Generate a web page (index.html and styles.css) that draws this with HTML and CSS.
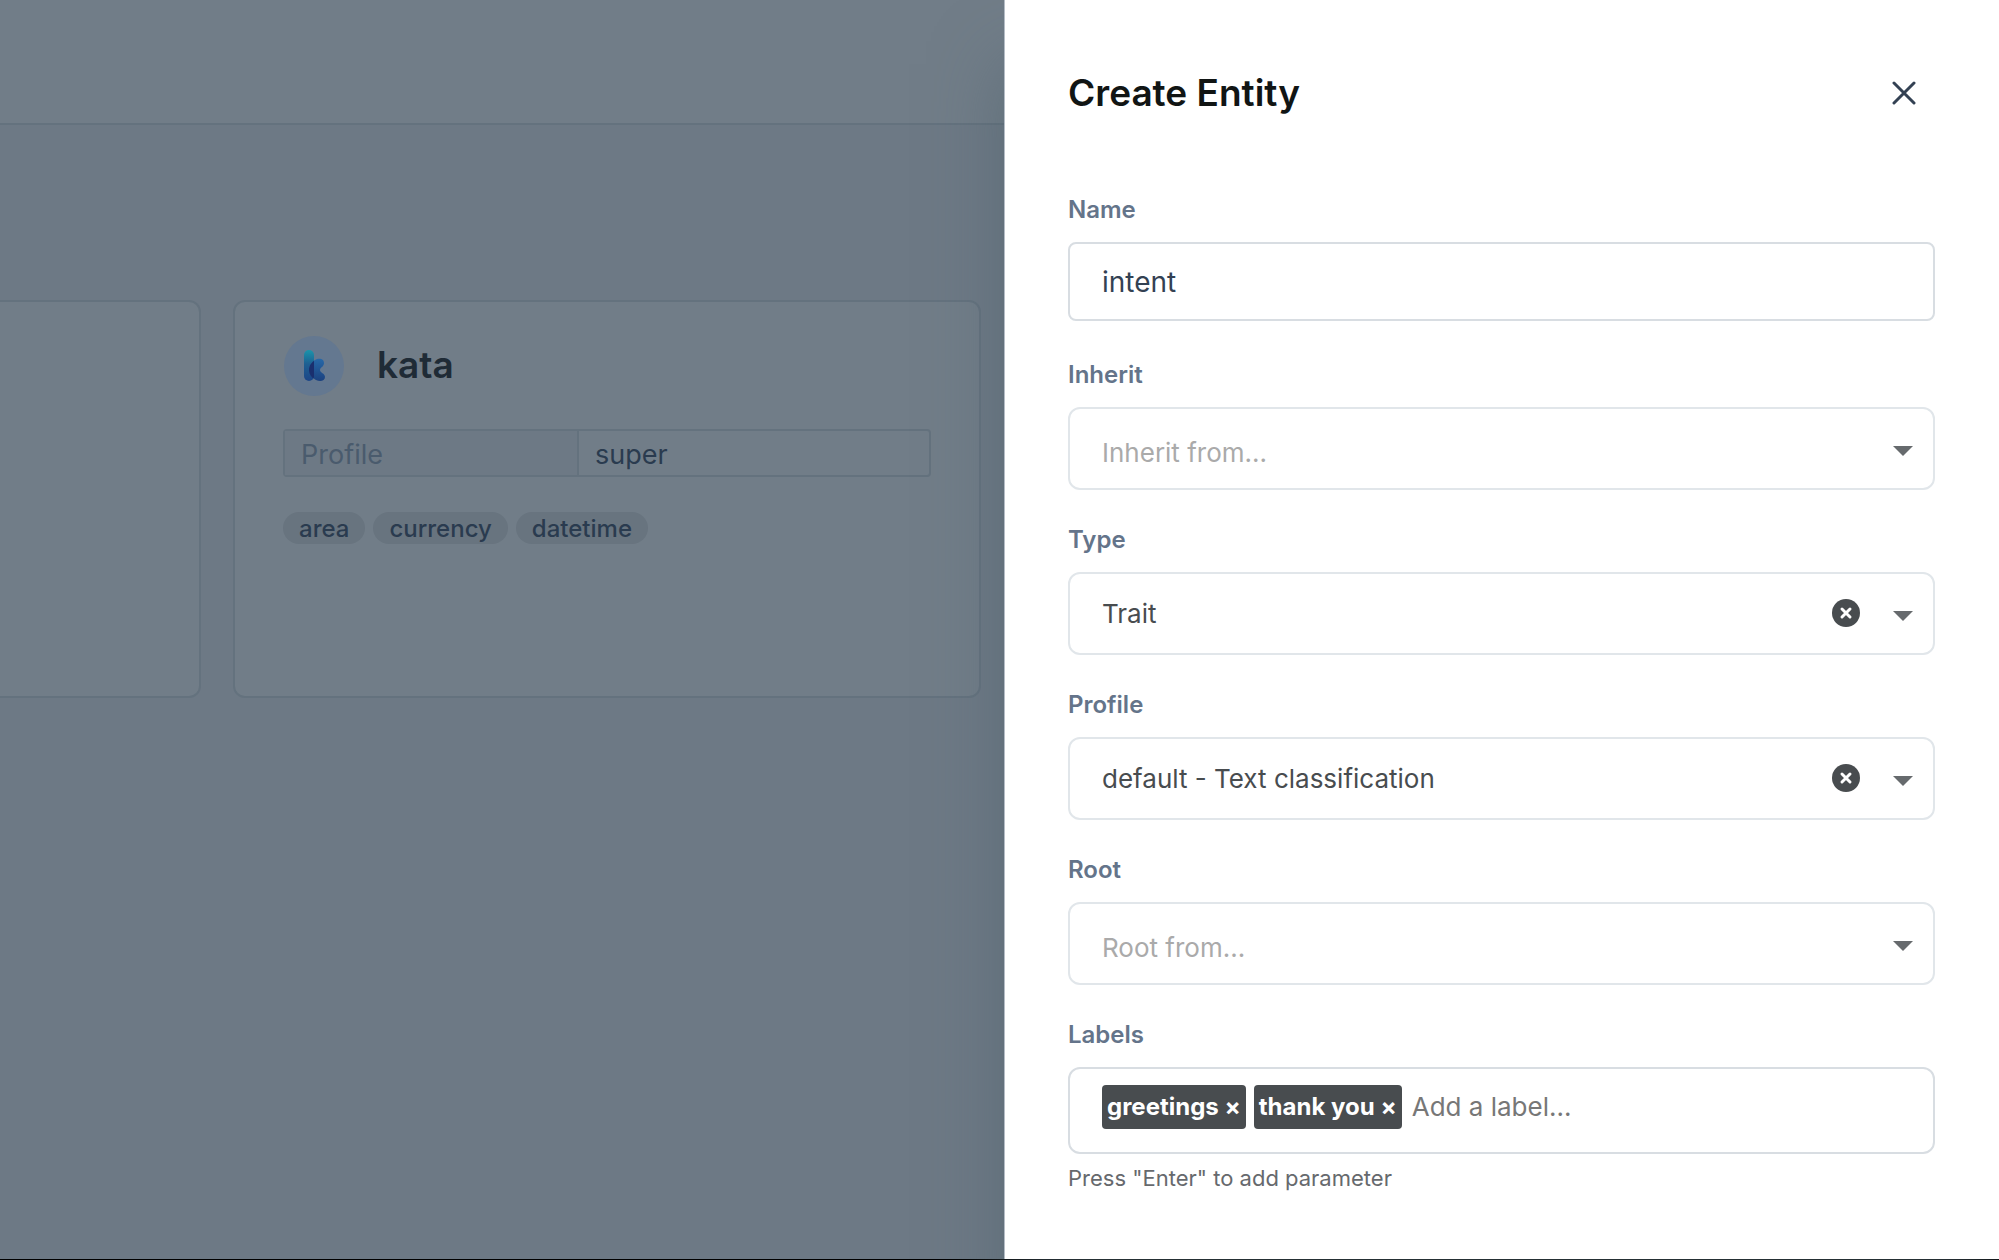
FILE: index.html
```html
<!DOCTYPE html>
<html lang="en">
<head>
<meta charset="utf-8">
<meta name="viewport" content="width=device-width, initial-scale=1">
<title>Create Entity</title>
<link rel="stylesheet" href="styles.css">
</head>
<body>
<div class="app">
  <main class="page">
    <header class="topbar"></header>
    <div class="cards">
      <article class="card card-cut"></article>
      <article class="card">
        <div class="card-head">
          <svg class="avatar" viewBox="0 0 60 60" aria-hidden="true">
            <defs>
              <linearGradient id="stem" x1="0" y1="0" x2="0" y2="1">
                <stop offset="0" stop-color="#1b95ab"/>
                <stop offset=".45" stop-color="#1d5f92"/>
                <stop offset="1" stop-color="#1c4587"/>
              </linearGradient>
              <linearGradient id="leg" x1="0" y1="0" x2="0" y2="1">
                <stop offset="0" stop-color="#2668a8"/>
                <stop offset="1" stop-color="#1b417f"/>
              </linearGradient>
              <clipPath id="stem-clip"><rect x="20" y="14" width="10" height="31" rx="5"/></clipPath>
            </defs>
            <circle cx="30" cy="30" r="30" fill="#647890"/>
            <rect x="20" y="14" width="10" height="31" rx="5" fill="url(#stem)"/>
            <path d="M25 34C25 29 28 26 31 24C34 22 40 22 40 27C40 31 36 31 36 34C36 37 41 37 41 41C41 45 36 46 32 44C29 42 25 39 25 34Z" fill="url(#leg)"/>
            <path clip-path="url(#stem-clip)" d="M25 34C25 29 28 26 31 24V44C29 42 25 39 25 34Z" fill="#1a2f6e"/>
          </svg>
          <h2 class="card-title">kata</h2>
        </div>
        <table class="props">
          <tr><th scope="row">Profile</th><td>super</td></tr>
        </table>
        <ul class="chips">
          <li>area</li><li>currency</li><li>datetime</li>
        </ul>
      </article>
    </div>
  </main>

  <aside class="drawer" role="dialog" aria-labelledby="drawer-title">
    <header class="drawer-head">
      <h1 id="drawer-title">Create Entity</h1>
      <button class="close" type="button" aria-label="Close">
        <svg viewBox="0 0 24 24" width="24" height="24"><path d="M2 2L22 22M22 2L2 22" fill="none" stroke="#334153" stroke-width="3" stroke-linecap="round"/></svg>
      </button>
    </header>

    <form class="form">
      <div class="field">
        <label for="name">Name</label>
        <input class="text-input" id="name" type="text" value="intent">
      </div>

      <div class="field">
        <label for="inherit">Inherit</label>
        <div class="select">
          <select class="empty" id="inherit"><option>Inherit from...</option></select>
          <svg class="arrow" viewBox="0 0 20 10"><path d="M0 0H20L10 10Z"/></svg>
        </div>
      </div>

      <div class="field">
        <label for="type">Type</label>
        <div class="select">
          <select id="type"><option>Trait</option></select>
          <button class="clear" type="button" aria-label="Clear type">
            <svg viewBox="0 0 28 28"><circle cx="14" cy="14" r="14" fill="#484c4f"/><path d="M10 10L18 18M18 10L10 18" stroke="#fff" stroke-width="3" stroke-linecap="round"/></svg>
          </button>
          <svg class="arrow" viewBox="0 0 20 10"><path d="M0 0H20L10 10Z"/></svg>
        </div>
      </div>

      <div class="field">
        <label for="profile">Profile</label>
        <div class="select">
          <select id="profile"><option>default - Text classification</option></select>
          <button class="clear" type="button" aria-label="Clear profile">
            <svg viewBox="0 0 28 28"><circle cx="14" cy="14" r="14" fill="#484c4f"/><path d="M10 10L18 18M18 10L10 18" stroke="#fff" stroke-width="3" stroke-linecap="round"/></svg>
          </button>
          <svg class="arrow" viewBox="0 0 20 10"><path d="M0 0H20L10 10Z"/></svg>
        </div>
      </div>

      <div class="field">
        <label for="root">Root</label>
        <div class="select">
          <select class="empty" id="root"><option>Root from...</option></select>
          <svg class="arrow" viewBox="0 0 20 10"><path d="M0 0H20L10 10Z"/></svg>
        </div>
      </div>

      <div class="field">
        <label for="labels">Labels</label>
        <div class="tag-box">
          <span class="tag">greetings <button type="button" aria-label="Remove greetings">×</button></span>
          <span class="tag">thank you <button type="button" aria-label="Remove thank you">×</button></span>
          <input id="labels" type="text" placeholder="Add a label...">
        </div>
        <p class="help">Press "Enter" to add parameter</p>
      </div>
    </form>
  </aside>
</div>
</body>
</html>
```
FILE: styles.css
```css
* {
  box-sizing: border-box;
}

body {
  margin: 0;
  font-family: Inter, "Liberation Sans", sans-serif;
  font-size: 26px;
  color: #484c4f;
}

h1, h2, p, ul {
  margin: 0;
  padding: 0;
}

button, input, select {
  font: inherit;
  color: inherit;
}

button {
  padding: 0;
  border: 0;
  background: none;
  cursor: pointer;
}

.app {
  display: grid;
  grid-template-columns: minmax(0, 1fr) 995px;
  min-height: 100vh;
  border-bottom: 1px solid #000;
}

/* Dimmed page behind the drawer */
.page {
  background: #6d7985;
  overflow: hidden;
}

.topbar {
  height: 125px;
  background: #717d88;
  border-bottom: 2px solid #64727e;
}

.cards {
  display: flex;
  gap: 32px;
  padding: 175px 23px 0 0;
}

.card {
  flex: 0 0 748px;
  min-height: 398px;
  padding: 34px 48px;
  background: #717d88;
  border: 2px solid #64727e;
  border-radius: 12px;
}

.card-cut {
  flex: 1 1 0;
  padding: 0;
  border-left: 0;
  border-radius: 0 12px 12px 0;
}

.card-head {
  display: flex;
  align-items: center;
  gap: 32px;
  margin-bottom: 33px;
}

.avatar {
  width: 62px;
  height: 60px;
}

.card-title {
  padding-bottom: 2px;
  font-size: 37px;
  line-height: 48px;
  font-weight: 600;
  color: #1f2b36;
}

.props {
  width: 100%;
  height: 48px;
  table-layout: fixed;
  border-collapse: separate;
  border-spacing: 0;
  border: 2px solid #64727e;
  border-radius: 4px;
  font-size: 27px;
  line-height: 40px;
  text-align: left;
}

.props th {
  width: 294px;
  padding: 4px 16px 0;
  border-right: 2px solid #64727e;
  background: #6d7985;
  color: #4a5b6d;
  font-weight: 400;
}

.props td {
  padding: 4px 16px 0;
  color: #2a3b4f;
}

.chips {
  display: flex;
  gap: 8px;
  margin-top: 35px;
  list-style: none;
}

.chips li {
  padding: 2px 16px 0;
  border-radius: 16px;
  background: #68747f;
  color: #2a3b4f;
  font-size: 24px;
  line-height: 30px;
  font-weight: 500;
}

/* Drawer */
.drawer {
  position: relative;
  padding: 63px 64px 48px 63px;
  background: #fff;
  border-left: 1px solid #b5bdc6;
  box-shadow: 0 64px 64px rgba(75, 95, 105, .5);
}

.drawer-head {
  display: flex;
  align-items: center;
  justify-content: space-between;
  height: 60px;
  padding-right: 19px;
  margin-bottom: 75px;
}

.drawer-head h1 {
  font-size: 37px;
  line-height: 48px;
  font-weight: 600;
  color: #111514;
}

.close svg {
  display: block;
}

.form {
  display: grid;
  gap: 37px;
}

.field {
  min-height: 128px;
}

.field label {
  display: block;
  margin-bottom: 20px;
  font-size: 24px;
  line-height: 24px;
  font-weight: 600;
  color: #64748a;
}

.text-input {
  display: block;
  width: 100%;
  height: 79px;
  padding: 0 32px;
  border: 2px solid #d8dde2;
  border-radius: 8px;
  background: #fff;
  color: #334153;
  font-size: 28px;
}

.select {
  position: relative;
}

.select select {
  display: block;
  width: 100%;
  height: 83px;
  padding: 0 132px 0 32px;
  border: 2px solid #e1e6ea;
  border-radius: 12px;
  background: #fff;
  appearance: none;
}

.select .empty {
  padding-top: 8px;
  color: #aaa;
}

.arrow {
  position: absolute;
  right: 22px;
  top: 39px;
  width: 20px;
  height: 10px;
  fill: #666a6d;
  pointer-events: none;
}

.clear {
  position: absolute;
  right: 75px;
  top: 27px;
}

.clear svg {
  display: block;
  width: 28px;
  height: 28px;
}

.tag-box {
  display: flex;
  gap: 8px;
  height: 87px;
  padding: 16px 32px;
  border: 2px solid #d8dde2;
  border-radius: 12px;
}

.tag {
  height: 44px;
  padding: 0 5px;
  border-radius: 4px;
  background: #484c4f;
  color: #fff;
  font-size: 24px;
  line-height: 44px;
  font-weight: 700;
  white-space: nowrap;
}

.tag-box input {
  flex: 1;
  min-width: 0;
  height: 42px;
  padding: 0 2px;
  border: 0;
  outline: 0;
  background: none;
}

.tag-box input::placeholder {
  color: #777;
  opacity: 1;
}

.help {
  margin-top: 11px;
  font-size: 22px;
  line-height: 26px;
  color: #66696d;
}
```
